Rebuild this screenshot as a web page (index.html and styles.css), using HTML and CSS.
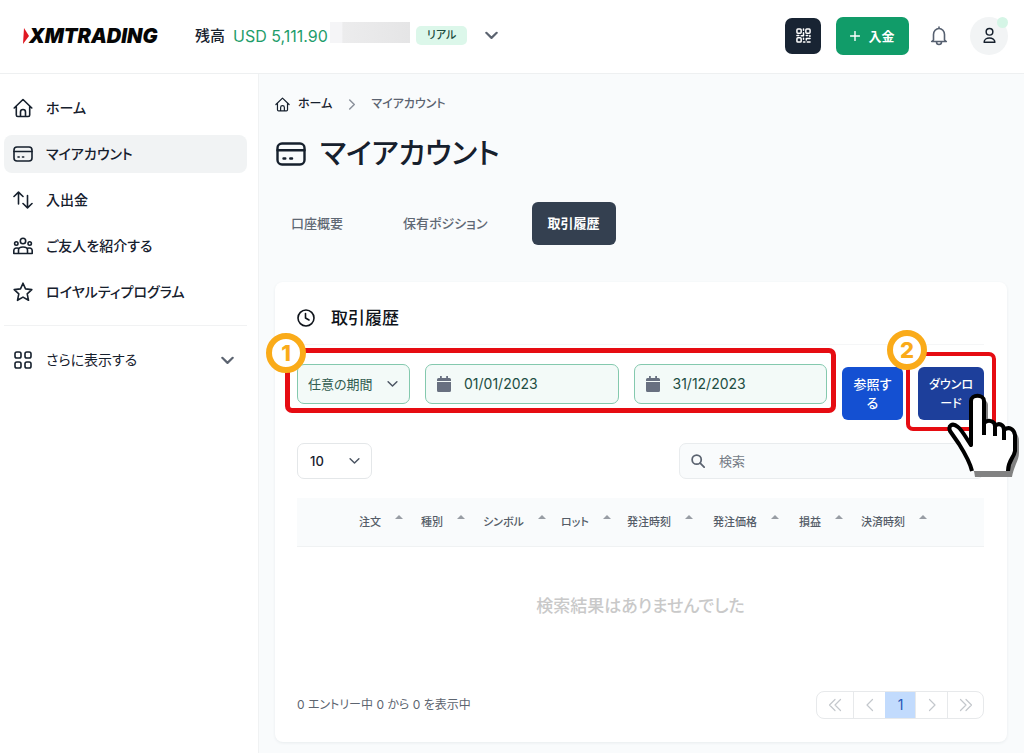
FILE: index.html
```html
<!DOCTYPE html>
<html lang="ja">
<head>
<meta charset="utf-8">
<meta name="viewport" content="width=device-width, initial-scale=1">
<title>マイアカウント</title>
<link rel="stylesheet" href="styles.css">
</head>
<body>
<svg class="sprite" aria-hidden="true">
  <symbol id="home" viewBox="0 0 20 20"><path d="M1.2 10 10 1.5 18.800 10M3.300 8.500V17a1.500 1.500 0 0 0 1.500 1.500h10.400a1.500 1.500 0 0 0 1.500-1.500V8.500M7.500 18.300V14a2.500 2.500 0 0 1 5 0v4.300"/></symbol>
  <symbol id="card" viewBox="0 0 20 16"><rect x="1" y="1" width="18" height="14" rx="3"/><path d="M1 5.500h18M5 11h1.200M9.500 11h1.200"/></symbol>
  <symbol id="chevron" viewBox="0 0 12 8"><path d="m1.200 1.500 4.800 4.700 4.800-4.700"/></symbol>
  <symbol id="calendar" viewBox="0 0 14 16"><path d="M3 0h1.800v2h4.400V0H11v2h1.500A1.500 1.500 0 0 1 14 3.500V5H0V3.500A1.500 1.500 0 0 1 1.500 2H3zM0 6h14v8.500a1.500 1.500 0 0 1-1.500 1.500h-11A1.500 1.500 0 0 1 0 14.500z"/></symbol>
</svg>

<header class="topbar">
  <a class="logo" href="#" aria-label="XMTRADING">
    <svg class="logo-mark" viewBox="0 0 6 16" aria-hidden="true"><path d="M1 0 6 8 0 16z"/></svg><span>XMTRADING</span>
  </a>
  <div class="balance">
    <span>残高</span><span class="amount">USD 5,111.90</span><span class="masked"></span>
    <span class="badge">リアル</span>
    <button class="plain" type="button" aria-label="口座を切り替える"><svg class="icon chev"><use href="#chevron"/></svg></button>
  </div>
  <div class="actions">
    <button class="qr" type="button" aria-label="QRコード">
      <svg viewBox="0 0 16 16" class="icon qr-icon"><rect x="1" y="1" width="4.500" height="4.500" rx="1"/><rect x="10.500" y="1" width="4.500" height="4.500" rx="1"/><rect x="1" y="10.500" width="4.500" height="4.500" rx="1"/><path d="M8 1v1.500M8 5v3.200H5.500M1 8h2M8 11v1M8 14.800h1.500M11 8h1.500M14.800 8v1M11 11.200h4M11 11.200v1.500M12 14.800h3"/></svg>
    </button>
    <button class="deposit" type="button"><svg viewBox="0 0 10 10" class="icon plus"><path d="M5 .5v9M.5 5h9"/></svg>入金</button>
    <button class="plain" type="button" aria-label="通知">
      <svg viewBox="0 0 18 20" class="icon bell"><path d="M9 1v1.500M3.500 14V8.500a5.500 6 0 0 1 11 0V14l1.800 1.500H1.700zM6.500 16a2.500 2.500 0 0 0 5 0"/></svg>
    </button>
    <button class="avatar" type="button" aria-label="プロフィール">
      <svg viewBox="0 0 14 18" class="icon person"><circle cx="7" cy="5" r="3.600"/><path d="M1.200 16.200c0-6 11.600-6 11.600 0z"/></svg>
      <span class="status"></span>
    </button>
  </div>
</header>

<div class="layout">
  <nav class="sidebar" aria-label="メイン">
    <ul class="menu">
      <li><a href="#"><svg class="icon nav"><use href="#home"/></svg>ホーム</a></li>
      <li><a class="active" href="#"><svg class="icon nav"><use href="#card"/></svg>マイアカウント</a></li>
      <li><a href="#"><svg class="icon nav" viewBox="0 0 20 20"><path d="M5.500 14V2.500M1 6.500l4.500-4.300L10 6.500M14.500 5.500v12M10 13.500l4.500 4.300 4.500-4.300"/></svg>入出金</a></li>
      <li><a href="#"><svg class="icon nav" viewBox="0 0 20 20"><circle cx="10" cy="5" r="2.700"/><circle cx="3.300" cy="7.500" r="1.700"/><circle cx="16.700" cy="7.500" r="1.700"/><path d="M5.500 17.500V14c0-4 9-4 9 0v3.500zM5.500 17.500H.8v-3c0-2 2.400-3 4.700-2.200M14.500 17.500h4.700v-3c0-2-2.400-3-4.700-2.200"/></svg>ご友人を紹介する</a></li>
      <li><a href="#"><svg class="icon nav" viewBox="0 0 20 20"><path d="m10 1.200 2.500 5.700 6.300.7-4.600 4.200 1.300 6.500L10 15.100l-5.500 3.200 1.300-6.500L1.200 7.600l6.300-.7z"/></svg>ロイヤルティプログラム</a></li>
    </ul>
    <button class="more" type="button">
      <svg class="icon nav" viewBox="0 0 20 20"><rect x="2" y="2" width="6" height="6" rx="1.800"/><rect x="12" y="2" width="6" height="6" rx="1.800"/><rect x="2" y="12" width="6" height="6" rx="1.800"/><rect x="12" y="12" width="6" height="6" rx="1.800"/></svg>
      さらに表示する
      <svg class="icon chev"><use href="#chevron"/></svg>
    </button>
  </nav>

  <main class="content">
    <nav class="crumbs" aria-label="パンくずリスト">
      <a href="#"><svg class="icon crumb-home"><use href="#home"/></svg>ホーム</a>
      <svg class="icon crumb-sep" viewBox="0 0 8 12"><path d="m1.500 1 5 5-5 5"/></svg>
      <span>マイアカウント</span>
    </nav>
    <h1><svg class="icon title-icon"><use href="#card"/></svg>マイアカウント</h1>
    <div class="tabs" role="tablist">
      <button type="button" role="tab">口座概要</button>
      <button type="button" role="tab">保有ポジション</button>
      <button class="selected" type="button" role="tab" aria-selected="true">取引履歴</button>
    </div>

    <section class="panel">
      <h2><svg class="icon clock" viewBox="0 0 18 18"><circle cx="9" cy="9" r="8"/><path d="M8.500 4.500V9l3.500 2"/></svg>取引履歴</h2>

      <form class="filters">
        <div class="fields">
          <span class="select period"><select aria-label="期間"><option>任意の期間</option></select><svg class="icon small-chev"><use href="#chevron"/></svg></span>
          <label class="date"><svg class="solid"><use href="#calendar"/></svg><input type="text" value="01/01/2023" aria-label="開始日"></label>
          <label class="date"><svg class="solid"><use href="#calendar"/></svg><input type="text" value="31/12/2023" aria-label="終了日"></label>
          <span class="step">1</span>
        </div>
        <div class="submit">
          <button class="view" type="button">参照す<br>る</button>
          <div class="download-wrap">
            <button class="download" type="button">ダウンロ<br>ード</button>
            <span class="step">2</span>
            <svg class="hand" viewBox="0 0 74 86" aria-hidden="true">
              <path class="hand-shadow" d="M29 85C28 73 20 63 14 57L8 43C5 37 12 34 18 41L29 58V13C29 6 42 6 42 13V35C47 32 53 34 53 38C57 35 62 38 62 42C68 38 73 42 73 49V61C73 68 68 74 66 85z"/>
              <path class="hand-fill" d="M25 79C25 70 18 60 13 52L4 39C2 34 6 30 12 35C16 38 20 46 25 53V9C25 2 38 2 38 9V31C42 27 49 29 49 34C53 30 58 33 58 38C63 34 68 37 69 43V59C68 66 62 68 62 79z"/>
              <path class="hand-line" d="M26 79C24 70 18 60 13 52L4 39C2 34 6 30 12 35C16 38 20 46 25 53V9C25 2 38 2 38 9V31C42 27 49 29 49 34C53 30 58 33 58 38C63 34 68 37 69 43V59C68 66 62 68 62 79M38 29V43M49 33V44M58 37V48"/>
            </svg>
          </div>
        </div>
      </form>

      <div class="tools">
        <span class="select count"><select aria-label="表示件数"><option>10</option></select><svg class="icon small-chev"><use href="#chevron"/></svg></span>
        <label class="search"><svg class="icon lens" viewBox="0 0 16 16"><circle cx="6.500" cy="6.500" r="5.200"/><path d="m10.500 10.500 4.500 4.500"/></svg><input type="search" placeholder="検索" aria-label="検索"></label>
      </div>

      <table>
        <colgroup><col class="c-lead"><col class="c-short"><col class="c-short"><col class="c-symbol"><col class="c-lot"><col class="c-long"><col class="c-long"><col class="c-short"><col></colgroup>
        <thead><tr>
          <td></td>
          <th><button type="button">注文</button></th>
          <th><button type="button">種別</button></th>
          <th><button type="button">シンボル</button></th>
          <th><button type="button">ロット</button></th>
          <th><button type="button">発注時刻</button></th>
          <th><button type="button">発注価格</button></th>
          <th><button type="button">損益</button></th>
          <th><button type="button">決済時刻</button></th>
        </tr></thead>
        <tbody><tr><td class="empty" colspan="9">検索結果はありませんでした</td></tr></tbody>
      </table>

      <div class="foot">
        <span>0 エントリー中 0 から 0 を表示中</span>
        <div class="pager">
          <button class="edge" type="button" aria-label="最初のページ"><svg class="icon page-icon" viewBox="0 0 14 14"><path d="M7 1.500 1.500 7 7 12.500M12.500 1.500 7 7l5.500 5.500"/></svg></button>
          <button type="button" aria-label="前のページ"><svg class="icon page-icon" viewBox="0 0 14 14"><path d="M9.500 1.500 4 7l5.500 5.500"/></svg></button>
          <button class="current" type="button" aria-current="page">1</button>
          <button type="button" aria-label="次のページ"><svg class="icon page-icon" viewBox="0 0 14 14"><path d="M4.500 1.500 10 7l-5.500 5.500"/></svg></button>
          <button class="edge" type="button" aria-label="最後のページ"><svg class="icon page-icon" viewBox="0 0 14 14"><path d="M1.500 1.500 7 7l-5.500 5.500M7 1.500 12.500 7 7 12.500"/></svg></button>
        </div>
      </div>
    </section>
  </main>
</div>
</body>
</html>
```
FILE: styles.css
```css
* { box-sizing: border-box; }
body {
  margin: 0;
  min-height: 100vh;
  display: flex;
  flex-direction: column;
  background: #fff;
  color: #16202d;
  font: 500 14px/20px Inter, "Noto Sans CJK JP", sans-serif;
  font-feature-settings: "palt";
}
button, input, select { font: inherit; font-feature-settings: inherit; color: inherit; margin: 0; }
button { border: 0; background: none; padding: 0; }
a { color: inherit; text-decoration: none; }
.sprite { position: absolute; width: 0; height: 0; }
.icon { display: block; flex: none; fill: none; stroke: currentColor; stroke-width: 1.6; stroke-linecap: round; stroke-linejoin: round; }
.chev { width: 13px; height: 9px; stroke-width: 2; color: #5b6370; }
.small-chev { width: 11px; height: 8px; color: #4b5563; }

/* Top bar */
.topbar { display: flex; align-items: center; height: 74px; padding: 0 16px 2px 23px; border-bottom: 1px solid #eef0f1; }
.logo { display: flex; align-items: center; width: 172px; color: #060606; font: italic 900 20px/24px Inter, sans-serif; }
.logo-mark { width: 6px; height: 16px; fill: #e01822; }
.balance { display: flex; align-items: center; font-size: 15px; }
.amount { margin-left: 8px; color: #1f9d6b; font-size: 16px; font-weight: 400; }
.masked { width: 80px; height: 21px; margin: -6px 6px 0 2px; background: linear-gradient(90deg, #f5f5f7 15%, #ececed 16%, #e5e5e6); }
.badge { padding: 0 11px; border-radius: 5px; background: #dcf7ea; color: #1d4d40; font-size: 11px; line-height: 19px; }
.plain { display: grid; place-items: center; }
.balance .plain { margin-left: 18px; }
.actions { display: flex; align-items: center; margin-left: auto; }
.qr { display: grid; place-items: center; width: 36px; height: 36px; border-radius: 7px; background: #182433; color: #fff; }
.qr-icon { width: 15px; height: 15px; }
.deposit { display: flex; align-items: center; justify-content: center; gap: 8px; width: 73px; height: 38px; margin: 0 21px 0 15px; border-radius: 7px; background: #119c69; color: #fff; font-size: 13px; font-weight: 700; }
.plus { width: 10px; height: 10px; stroke-width: 1.4; }
.bell { width: 18px; height: 20px; color: #566070; }
.avatar { position: relative; display: grid; place-items: center; width: 38px; height: 38px; margin-left: 22px; border-radius: 50%; background: #f2f4f5; }
.person { width: 13px; height: 17px; }
.status { position: absolute; top: 0; right: 0; width: 11px; height: 11px; border-radius: 50%; background: #d5f5e6; }

/* Side menu */
.layout { flex: 1; display: grid; grid-template-columns: 259px minmax(0, 1fr); }
.sidebar { padding: 15px 11px 0 4px; border-right: 1px solid #f0f2f3; }
.menu { display: grid; gap: 8px; margin: 0; padding: 0 0 14px; list-style: none; border-bottom: 1px solid #f1f2f3; }
.menu a, .more { display: flex; align-items: center; gap: 13px; height: 38px; padding: 0 9px; border-radius: 8px; font-size: 14px; }
.menu a.active { background: #f1f3f4; }
.nav { width: 20px; height: 20px; }
.more { width: 100%; margin-top: 15px; padding-right: 13px; font-weight: 400; }
.more .chev { margin-left: auto; }

/* Page head */
.content { padding: 20px 17px 10px 16px; background: #f9fbfc; }
.crumbs { display: flex; align-items: center; font-size: 12px; color: #5b6370; }
.crumbs a { display: flex; align-items: center; gap: 8px; color: #16202d; }
.crumb-home { width: 15px; height: 15px; }
.crumb-sep { width: 8px; height: 11px; margin: 0 15px 0 16px; color: #8b919b; }
h1 { display: flex; align-items: center; gap: 14px; margin: 16px 0 24px 1px; font-size: 29px; line-height: 48px; font-weight: 500; }
.title-icon { width: 30px; height: 24px; }
.tabs { display: flex; gap: 28px; color: #5f6874; font-size: 13px; }
.tabs button { height: 43px; padding: 0 16px 2px; }
.tabs .selected { border-radius: 6px; background: #344050; color: #fff; font-weight: 700; }

/* History panel */
.panel { margin-top: 37px; padding: 21px 23px 23px 22px; border-radius: 8px; background: #fff; box-shadow: 0 1px 3px #e8ecee; }
h2 { display: flex; align-items: center; gap: 16px; margin: 0 0 11px; font-size: 17px; line-height: 30px; font-weight: 500; color: #0e131a; }
.clock { width: 18px; height: 18px; }
.filters { display: flex; align-items: flex-start; gap: 15px; padding-top: 19px; border-top: 1px solid #f5f6f7; font-size: 13px; }
.fields { position: relative; flex: 1; display: grid; grid-template-columns: 113px 1fr 1fr; gap: 15px; }
.fields::before { content: ""; position: absolute; inset: -16px -9px -9px -12px; border: 5px solid #e60c12; border-radius: 7px; pointer-events: none; }
.select { position: relative; display: flex; }
.select select { width: 100%; appearance: none; padding: 0 12px; border: 1px solid #e4e7e9; border-radius: 7px; background: #fff; }
.select .small-chev { position: absolute; top: calc(50% - 4px); right: 12px; pointer-events: none; }
.period { height: 40px; }
.period select { padding: 0 10px; border-color: #84c9ae; background: #f3faf8; color: #315c50; font-weight: 400; }
.date { display: flex; align-items: center; gap: 13px; height: 40px; padding: 0 11px; border: 1px solid #84c9ae; border-radius: 7px; background: #f3faf8; color: #214d42; font-size: 14px; font-weight: 400; }
.date input { min-width: 0; width: 100%; padding: 0; border: 0; background: none; }
.solid { flex: none; width: 14px; height: 16px; fill: #687080; }
.submit { display: grid; grid-template-columns: 61px 66px; gap: 15px; padding-top: 3px; }
.submit button { width: 100%; height: 53px; border-radius: 6px; background: #1450d2; color: #fff; line-height: 19px; }
.submit .download { background: #1d3f9b; font-size: 12px; }
.download-wrap { position: relative; }
.download-wrap::before { content: ""; position: absolute; inset: -15px -12px -11px; border: 4px solid #e60c12; border-radius: 7px; pointer-events: none; }
.step { position: absolute; top: -31px; left: -31px; display: grid; place-items: center; width: 40px; height: 40px; border: 6px solid #faab19; border-radius: 50%; background: #fff; color: #faab19; font-size: 22px; font-weight: 800; }
.download-wrap .step { top: -37px; }
.hand { position: absolute; top: 25px; left: 28px; width: 74px; height: 86px; }
.hand-shadow { fill: #828282; }
.hand-fill { fill: #fff; }
.hand-line { fill: none; stroke: #000; stroke-width: 4; stroke-linejoin: round; }
.tools { display: flex; justify-content: space-between; margin: 23px 0 19px; font-size: 13px; }
.count { width: 75px; height: 36px; }
.search { display: flex; align-items: center; gap: 14px; width: 305px; height: 36px; padding: 0 11px; border: 1px solid #e9ecee; border-radius: 7px; background: #f9fbfc; }
.search input { flex: 1; min-width: 0; padding: 0; border: 0; background: none; font-weight: 400; }
.search input::placeholder { color: #757c86; }
.lens { width: 14px; height: 14px; stroke-width: 2; color: #5b6370; }

/* Table */
table { width: 100%; table-layout: fixed; border-collapse: collapse; }
thead { background: #f9fbfc; font-size: 11px; color: #555d68; }
thead tr { height: 48px; border-bottom: 1px solid #f0f2f3; }
.c-lead { width: 52px; }
.c-short { width: 62px; }
.c-symbol { width: 78px; }
.c-lot { width: 66px; }
.c-long { width: 86px; }
th { padding: 0 0 0 10px; text-align: left; font-weight: 500; }
th button { display: flex; align-items: flex-start; gap: 14px; line-height: 18px; white-space: nowrap; }
th button::after { content: ""; margin-top: 2px; border: 4px solid transparent; border-top: 0; border-bottom-color: #989da4; }
.empty { height: 119px; padding: 0; text-align: center; color: #c9c9c9; font-size: 17px; font-weight: 500; }
.foot { display: flex; align-items: center; justify-content: space-between; margin-top: 26px; color: #5d6570; font-size: 12px; font-weight: 400; }
.pager { display: flex; height: 28px; border: 1px solid #e7e9eb; border-radius: 8px; overflow: hidden; font-size: 14px; }
.pager button { display: grid; place-items: center; width: 32px; }
.pager button + button { border-left: 1px solid #e7e9eb; }
.pager .edge { width: 36px; }
.pager .current { width: 30px; background: #c2dbfd; color: #2857b8; border-color: #c2dbfd; }
.page-icon { width: 14px; height: 14px; stroke-width: 1.2; color: #c3c7cc; }
```
